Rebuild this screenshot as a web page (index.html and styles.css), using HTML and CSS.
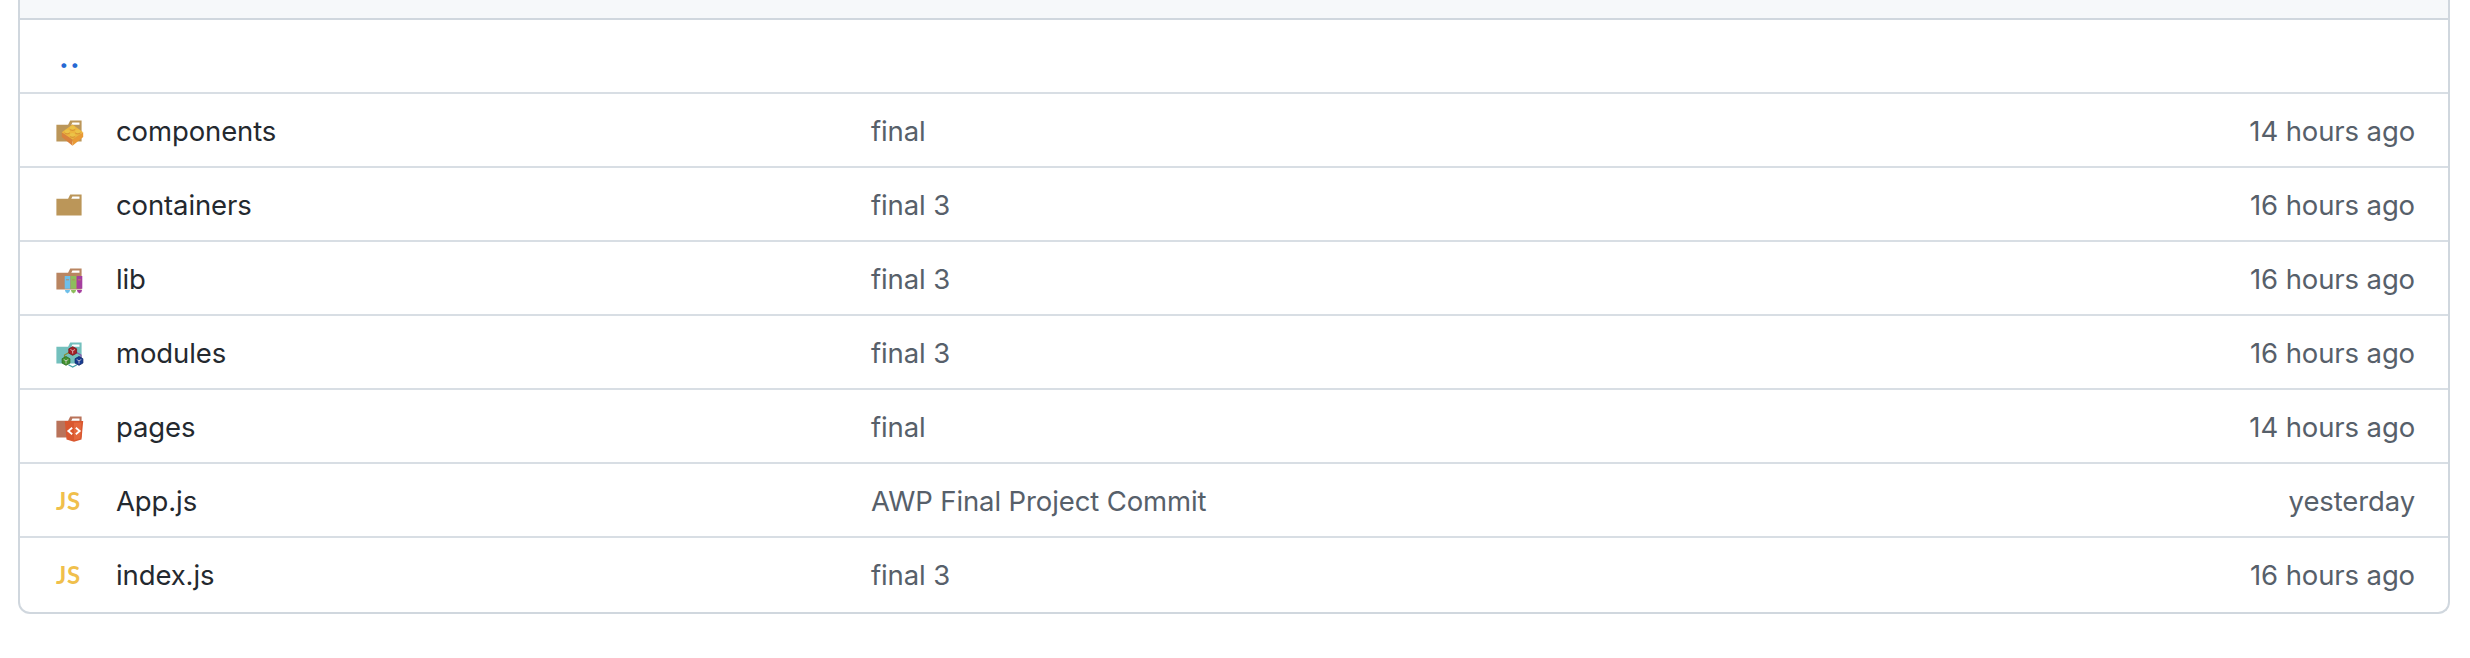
FILE: index.html
```
<!DOCTYPE html>
<html lang="en">
<head>
<meta charset="utf-8">
<title>Files</title>
<link rel="stylesheet" href="styles.css">
</head>
<body>
<svg class="defs" width="0" height="0" aria-hidden="true">
  <defs>
    <path id="folder" d="M27.5 5.5H18.2L16.1 9.7H4.4V26.5H29.6V5.5ZM27.5 9.7H19.3L20.4 7.6H27.5Z"/>
  </defs>
</svg>
<main class="files">
  <div class="files-header"></div>
  <div class="row row-up"><a class="up" href="#">..</a></div>
  <div class="row">
    <svg class="icon" viewBox="0 0 32 32">
      <use href="#folder" fill="#bb9659"/>
      <path fill="#d9823c" d="M9.8 17.2 20.5 24.6V30.8L9.8 22Z"/>
      <path fill="#e99a35" d="M31.2 17.2 20.5 24.6V30.8L31.2 22Z"/>
      <path fill="#edb53d" d="M20.5 9.6 31.2 17.2 20.5 24.6 9.8 17.2Z"/>
      <g fill="#db9836"><ellipse cx="20.5" cy="14.2" rx="2.8" ry="1.8"/><ellipse cx="15.2" cy="17.7" rx="2.8" ry="1.8"/><ellipse cx="25.8" cy="17.7" rx="2.8" ry="1.8"/><ellipse cx="20.5" cy="21.2" rx="2.8" ry="1.8"/></g>
      <g fill="#ebc348"><ellipse cx="20.5" cy="12.9" rx="2.8" ry="1.8"/><ellipse cx="15.2" cy="16.4" rx="2.8" ry="1.8"/><ellipse cx="25.8" cy="16.4" rx="2.8" ry="1.8"/><ellipse cx="20.5" cy="19.9" rx="2.8" ry="1.8"/></g>
    </svg>
    <a class="name" href="#">components</a><span class="message">final</span><span class="age">14 hours ago</span>
  </div>
  <div class="row">
    <svg class="icon" viewBox="0 0 32 32"><use href="#folder" fill="#bb9659"/></svg>
    <a class="name" href="#">containers</a><span class="message">final 3</span><span class="age">16 hours ago</span>
  </div>
  <div class="row">
    <svg class="icon" viewBox="0 0 32 32">
      <use href="#folder" fill="#b98561"/>
      <path fill="#6dbfe9" d="M12.7 13H18.3V25.7H12.7ZM12.9 27H18.1L17.2 29.4H16.6L15.5 30.5 14.4 29.4H13.8Z"/>
      <path fill="#8dbd5c" d="M18.7 13H24.3V25.7H18.7ZM18.9 27H24.1L23.2 29.4H22.6L21.5 30.5 20.4 29.4H19.8Z"/>
      <path fill="#a53e9f" d="M24.7 13H30.3V25.7H24.7ZM24.9 27H30.1L29.2 29.4H28.6L27.5 30.5 26.4 29.4H25.8Z"/>
      <path stroke="#b98561" stroke-width=".9" d="M14 16.8h3M20 16.8h3M26 16.8h3"/>
    </svg>
    <a class="name" href="#">lib</a><span class="message">final 3</span><span class="age">16 hours ago</span>
  </div>
  <div class="row">
    <svg class="icon" viewBox="0 0 32 32">
      <use href="#folder" fill="#73c0bd"/>
      <g fill="none" stroke-width="1.2">
        <path stroke="#8a8b32" d="M17 15.5 12.5 18V21"/>
        <path stroke="#8750a8" d="M24.5 15.5 29 18V21"/>
        <path stroke="#45a3a8" d="M16.5 27.7 20.7 30.1 24.9 27.7"/>
      </g>
      <g stroke-width=".8">
        <path fill="#a51f24" stroke="#761519" d="M20.7 9.7 24.6 11.8V16.2L20.7 18.3 16.8 16.2V11.8Z"/>
        <path fill="#42922f" stroke="#2b6b20" d="M14 19.5 17.9 21.7V26.1L14 28.3 10.1 26.1V21.7Z"/>
        <path fill="#173b91" stroke="#102768" d="M27 19.5 30.9 21.7V26.1L27 28.3 23.1 26.1V21.7Z"/>
      </g>
      <g fill="none" stroke="#e5dada" stroke-width=".75">
        <path d="M18.4 12.5 20.7 13.8 23 12.5M20.7 13.8V16.6"/>
        <path d="M11.7 22.5 14 23.8 16.3 22.5M14 23.8V26.6"/>
        <path d="M24.7 22.5 27 23.8 29.3 22.5M27 23.8V26.6"/>
      </g>
    </svg>
    <a class="name" href="#">modules</a><span class="message">final 3</span><span class="age">16 hours ago</span>
  </div>
  <div class="row">
    <svg class="icon" viewBox="0 0 32 32">
      <use href="#folder" fill="#b9735a"/>
      <path fill="#d9572f" d="M12.8 10H31.2L29.5 28.6 22 30.8 14.5 28.6Z"/>
      <path fill="#e4673d" d="M22 11.5H29.5L28.1 27.4 22 29.2Z"/>
      <path fill="none" stroke="#fff" stroke-width="1.8" d="M20.2 16.8 16.3 20 20.2 23.2M23.8 16.8 27.7 20 23.8 23.2"/>
    </svg>
    <a class="name" href="#">pages</a><span class="message">final</span><span class="age">14 hours ago</span>
  </div>
  <div class="row">
    <span class="icon js">JS</span>
    <a class="name" href="#">App.js</a><span class="message">AWP Final Project Commit</span><span class="age">yesterday</span>
  </div>
  <div class="row row-last">
    <span class="icon js">JS</span>
    <a class="name" href="#">index.js</a><span class="message">final 3</span><span class="age">16 hours ago</span>
  </div>
</main>
</body>
</html>
```
FILE: styles.css
```
* { box-sizing: border-box; }
body {
  margin: 0;
  background: #fff;
  color: #24292f;
  font: 27.5px/42px Inter, "Liberation Sans", sans-serif;
}
.defs { display: block; }
a { color: inherit; text-decoration: none; }
.files {
  width: 2432px;
  margin-left: 18px;
  border: 2px solid #d0d7de;
  border-top: 0;
  border-radius: 0 0 12px 12px;
  overflow: hidden;
}
.files-header {
  height: 20px;
  background: #f6f8fa;
  border-bottom: 2px solid #d0d7de;
}
.row {
  display: flex;
  align-items: center;
  height: 74px;
  padding: 0 33px 0 32px;
  border-top: 2px solid #d8dee4;
}
.row-up { height: 72px; border-top: 0; }
.row-last { height: 76px; padding-bottom: 2px; }
.up {
  padding: 3px 0 0 7px;
  color: #2668d3;
  font-size: 29px;
  font-weight: 700;
  letter-spacing: 1.2px;
}
.icon {
  flex: none;
  width: 32px;
  height: 32px;
  margin: 2px 32px 0 0;
}
.js {
  padding-left: 4px;
  color: #f0bf4c;
  font: 700 24px/32px Lato, sans-serif;
  letter-spacing: .6px;
}
.name, .message, .age { padding-top: 2px; letter-spacing: -.12px; }
.name { width: 754px; }
.message { flex: 1; padding-left: 1px; color: #57606a; }
.age { color: #57606a; }
```
